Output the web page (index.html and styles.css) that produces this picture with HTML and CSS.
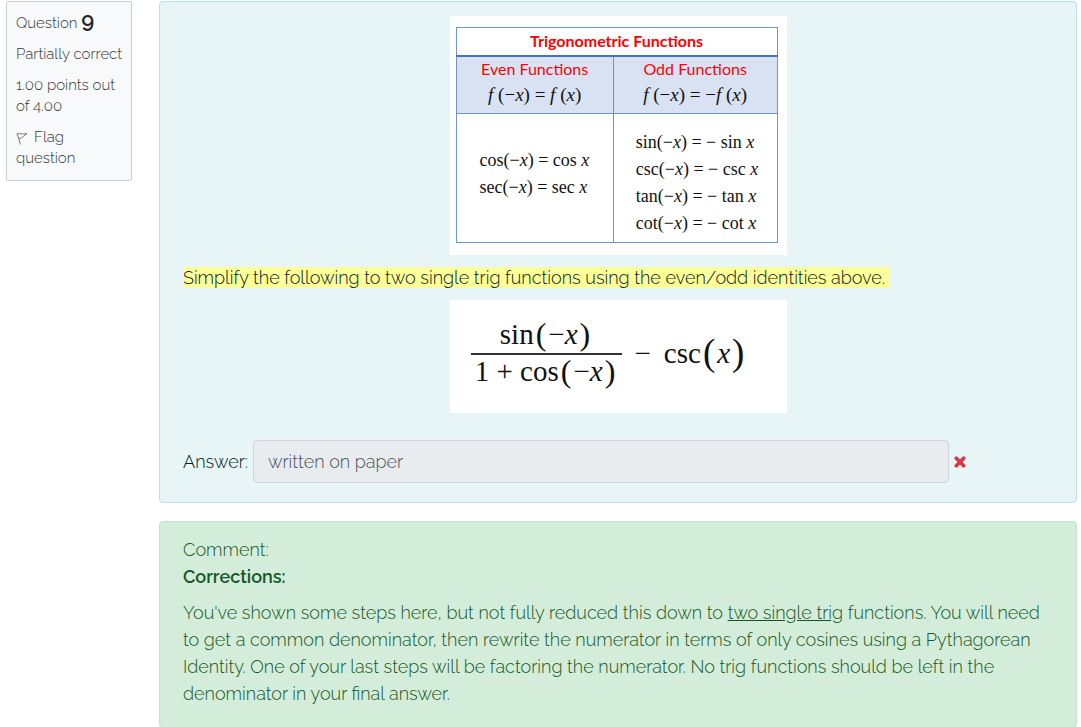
FILE: index.html
```html
<!DOCTYPE html>
<html lang="en">
<head>
<meta charset="utf-8">
<meta name="viewport" content="width=device-width, initial-scale=1">
<title>Question 9</title>
<link rel="stylesheet" href="styles.css">
</head>
<body>
<main class="question">
  <aside class="info">
    <h3 class="info-title">Question <span class="info-number">9</span></h3>
    <p class="info-text">Partially correct</p>
    <p class="info-text">1.00 points out of 4.00</p>
    <a class="info-text flag" href="#"><svg class="flag-icon" viewBox="0 0 12 13" aria-hidden="true"><path d="M1 1.500 4.500 12.500M1.200 2C4 .8 6 3 11 1.500 8 3.200 7.500 5.500 3.200 6.800"/></svg>Flag question</a>
  </aside>
  <div class="content">
    <section class="formulation">
      <div class="figure">
        <table class="trig">
          <colgroup><col class="col-even"><col class="col-odd"></colgroup>
          <thead>
            <tr class="trig-title"><th colspan="2">Trigonometric Functions</th></tr>
            <tr class="trig-head">
              <th>Even Functions<span class="def"><i>f</i> (−<i>x</i>) = <i>f</i> (<i>x</i>)</span></th>
              <th>Odd Functions<span class="def"><i>f</i> (−<i>x</i>) = −<i>f</i> (<i>x</i>)</span></th>
            </tr>
          </thead>
          <tbody>
            <tr class="trig-body">
              <td class="even"><div class="eqs"><span>cos(−<i>x</i>) = cos <i>x</i></span><span>sec(−<i>x</i>) = sec <i>x</i></span></div></td>
              <td class="odd"><div class="eqs"><span>sin(−<i>x</i>) = − sin <i>x</i></span><span>csc(−<i>x</i>) = − csc <i>x</i></span><span>tan(−<i>x</i>) = − tan <i>x</i></span><span>cot(−<i>x</i>) = − cot <i>x</i></span></div></td>
            </tr>
          </tbody>
        </table>
      </div>
      <p class="prompt"><mark>Simplify the following to two single trig functions using the even/odd identities above.&nbsp;</mark></p>
      <div class="figure expression">
        <span class="fraction">
          <span class="term">sin<span class="paren">(</span>−<i>x</i><span class="paren">)</span></span>
          <span class="term denominator">1 + cos<span class="paren">(</span>−<i>x</i><span class="paren">)</span></span>
        </span>
        <span class="term minus">−</span>
        <span class="term">csc<span class="paren large">(</span><i>x</i><span class="paren large">)</span></span>
      </div>
      <div class="answer">
        <label for="answer">Answer:</label>
        <input id="answer" class="answer-input" type="text" value="written on paper" readonly>
        <svg class="wrong" viewBox="0 0 13 13" role="img" aria-label="Incorrect"><path d="M2.500 2.500 10.500 10.500M10.500 2.500 2.500 10.500"/></svg>
      </div>
    </section>
    <section class="feedback">
      <h4 class="comment">Comment:</h4>
      <p class="corrections"><b>Corrections:</b></p>
      <p class="remark">You've shown some steps here, but not fully reduced this down to <u>two single trig</u> functions. You will need to get a common denominator, then rewrite the numerator in terms of only cosines using a Pythagorean Identity. One of your last steps will be factoring the numerator. No trig functions should be left in the denominator in your final answer.</p>
    </section>
  </div>
</main>
</body>
</html>
```
FILE: styles.css
```css
* { box-sizing: border-box; }
body {
  margin: 0;
  background: #fff;
  color: #001a1e;
  font: 300 18px/27px Raleway, "Open Sans", sans-serif;
}
h3, h4, p { margin: 0; font-weight: inherit; }
.question {
  display: flex;
  align-items: flex-start;
  gap: 27px;
  padding: 1px 4px 0 6px;
}
.info {
  flex: 0 0 126px;
  display: flex;
  flex-direction: column;
  gap: 10px;
  padding: 11px 5px 11px 9px;
  border: 1px solid #cad0d7;
  border-radius: 2px;
  background: #f8f9fa;
  color: #343a40;
  font-size: 15px;
  line-height: 21px;
}
.info-title { font-size: 15px; line-height: 21px; }
.info-number { font-size: 22px; font-weight: 600; line-height: 0; color: #212529; }
.flag { text-decoration: none; color: inherit; }
.flag-icon {
  width: 12px;
  height: 13px;
  margin-right: 6px;
  vertical-align: -3px;
  fill: none;
  stroke: #777;
  stroke-width: 1;
}
.content {
  flex: 1;
  min-width: 0;
  display: flex;
  flex-direction: column;
  gap: 18px;
}
.formulation {
  padding: 14px 23px 19px;
  border: 1px solid #b8e2e9;
  border-radius: 4px;
  background: #e7f5f6;
}
.figure {
  width: 337px;
  max-width: 100%;
  margin: 0 auto;
  padding: 11px 9px 12px 6px;
  background: #fff;
  color: #111;
}
.trig {
  width: 100%;
  border-collapse: collapse;
  table-layout: fixed;
  font: 18px/27px "Liberation Serif", serif;
}
.trig th, .trig td { padding: 0; border: 1px solid #6f93d2; }
.col-even { width: 49%; }
.trig-title th {
  height: 28px;
  border-bottom: 2px solid #4472c4;
  color: #f00;
  font: bold 16px/24px Lato, sans-serif;
}
.trig-head th {
  height: 58px;
  padding-bottom: 4px;
  background: #d9e2f3;
  color: #f00;
  font: 16px/24px Lato, sans-serif;
}
.def { display: block; color: #111; font: 19px/28px "Liberation Serif", serif; }
.trig-body td { height: 129px; }
.eqs { display: flex; flex-direction: column; }
.even .eqs { padding: 0 0 8px 23px; }
.odd .eqs { padding: 9px 0 0 22px; }
.prompt { padding: 9px 0; }
mark { background: #ff9; color: inherit; line-height: 20px; }
.expression {
  display: flex;
  align-items: flex-start;
  gap: 13px;
  padding: 17px 21px 21px;
  min-height: 113px;
  font: 29px/34px "Liberation Serif", serif;
}
.fraction { display: flex; flex-direction: column; width: 151px; }
.term { display: flex; align-items: center; justify-content: center; height: 36px; padding-bottom: 2px; white-space: pre; }
.denominator { border-top: 2px solid #333; }
.expression > .term { height: 74px; }
.paren { margin: 0 2px; font-size: 32px; }
.large { font-size: 37px; }
.answer { display: flex; align-items: center; gap: 5px; margin-top: 27px; }
.answer-input {
  width: 80%;
  height: 43px;
  padding: 6px 14px;
  border: 1px solid #ced4da;
  border-radius: 4px;
  background: #e9ecef;
  color: #495057;
  font: inherit;
}
.wrong { flex: none; width: 12px; height: 12px; fill: none; stroke: #dc3545; stroke-width: 4; stroke-linecap: round; }
.feedback {
  padding: 14px 23px 20px;
  border: 1px solid #c3e6cb;
  border-radius: 4px;
  background: #d4edda;
  color: #155724;
}
.comment { font-size: 18px; }
.corrections { margin-bottom: 9px; }
.corrections b { font-weight: 600; }
```
